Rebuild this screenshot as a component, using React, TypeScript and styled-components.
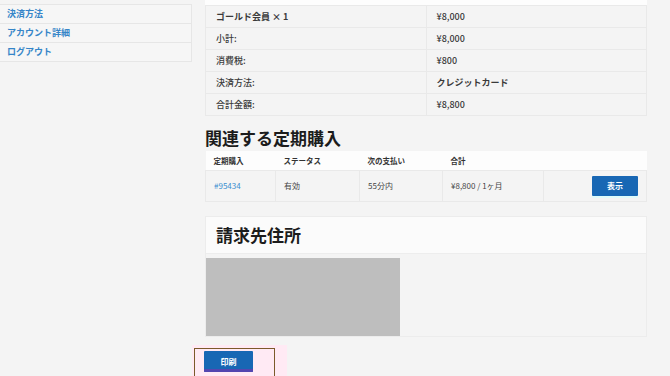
import React from "react";
import styled, { createGlobalStyle } from "styled-components";

const GlobalStyle = createGlobalStyle`
  html, body {
    margin: 0;
    padding: 0;
    background: #f4f4f4;
    font-family: "Noto Sans CJK JP", "Noto Sans", sans-serif;
    color: #333;
  }
`;

const Page = styled.div`
  display: flex;
  align-items: flex-start;
  width: 670px;
  height: 376px;
  overflow: hidden;
`;

const Sidebar = styled.nav`
  width: 191px;
  margin-top: 4px;
  border-top: 1px solid #e6e6e6;
  border-right: 1px solid #e6e6e6;
  background: #f6f6f6;
`;

const NavItem = styled.a`
  display: block;
  height: 18px;
  line-height: 18px;
  padding-left: 7px;
  font-size: 9px;
  font-weight: 700;
  color: #3585c8;
  border-bottom: 1px solid #e6e6e6;
  text-decoration: none;
`;

const Main = styled.main`
  width: 442px;
  margin-left: 13px;
`;

const TopStrip = styled.div`
  height: 5px;
  background: #fdfdfd;
`;

const Table = styled.table`
  width: 100%;
  border-collapse: collapse;
  table-layout: fixed;
`;

const Cell = styled.td<{ $bold?: boolean }>`
  height: 21px;
  padding: 0 10px;
  font-size: 9px;
  font-weight: ${(p) => (p.$bold ? 700 : 500)};
  color: #3a3a3a;
  border: 1px solid #e9e9e9;
  background: #f4f4f4;
`;

const SectionTitle = styled.h2`
  margin: 12px 0 3px;
  font-size: 17px;
  line-height: 20px;
  font-weight: 700;
  color: #1c1c1c;
`;

const SubTable = styled.table`
  width: 100%;
  border-collapse: collapse;
  table-layout: fixed;
`;

const HeadCell = styled.th<{ $w?: number }>`
  box-sizing: border-box;
  width: ${(p) => (p.$w ? `${p.$w}px` : "auto")};
  height: 19px;
  padding: 0 8px;
  text-align: left;
  font-size: 7.5px;
  font-weight: 700;
  color: #333;
  background: #fdfdfd;
`;

const BodyCell = styled.td<{ $right?: boolean }>`
  height: 30px;
  padding: 0 8px;
  text-align: ${(p) => (p.$right ? "right" : "left")};
  font-size: 8px;
  color: #444;
  background: #f4f4f4;
  border: 1px solid #e9e9e9;
`;

const SubLink = styled.a`
  color: #3a8fd0;
  text-decoration: none;
`;

const BlueButton = styled.button`
  display: block;
  height: 20px;
  padding: 0;
  border: none;
  border-radius: 1px;
  background: #1867b4;
  color: #fff;
  font-family: inherit;
  font-size: 8px;
  font-weight: 700;
`;

const ViewButton = styled(BlueButton)`
  width: 46px;
  margin-left: auto;
  box-shadow: 0 2px 0 #dffbfb;
`;

const AddressBox = styled.section`
  margin-top: 14px;
  border: 1px solid #ececec;
  background: #f4f4f4;
`;

const AddressHeader = styled.div`
  height: 36px;
  display: flex;
  align-items: center;
  padding-left: 10px;
  background: #fbfbfb;
  border-bottom: 1px solid #ededed;
`;

const AddressTitle = styled.h2`
  margin: 0;
  font-size: 17px;
  font-weight: 700;
  color: #1c1c1c;
`;

const AddressBody = styled.div`
  padding-top: 4px;
`;

const AddressPlaceholder = styled.div`
  width: 194px;
  height: 78px;
  background: #bebebe;
`;

const PrintArea = styled.div`
  margin: 8px 0 0 -13px;
  width: 95px;
  height: 40px;
  padding: 3px 0 0 2px;
  box-sizing: border-box;
  background: #ffeaf4;
`;

const PrintFrame = styled.div`
  width: 81px;
  height: 40px;
  padding: 2px 0 0 9px;
  box-sizing: border-box;
  border: 1.5px solid #7b5a2a;
`;

const PrintButton = styled(BlueButton)`
  width: 49px;
  height: 21px;
  box-shadow: inset 0 -3px 0 #5446b0;
`;

const orderRows: [string, string, boolean?][] = [
  ["ゴールド会員 × 1", "¥8,000"],
  ["小計:", "¥8,000"],
  ["消費税:", "¥800"],
  ["決済方法:", "クレジットカード", true],
  ["合計金額:", "¥8,800"],
];

export default function App(): React.ReactElement {
  return (
    <>
      <GlobalStyle />
      <Page>
        <Sidebar>
          <NavItem>決済方法</NavItem>
          <NavItem>アカウント詳細</NavItem>
          <NavItem>ログアウト</NavItem>
        </Sidebar>

        <Main>
          <TopStrip />
          <Table>
            <tbody>
              {orderRows.map(([label, value, strong]) => (
                <tr key={label}>
                  <Cell $bold={label.startsWith("ゴールド")}>{label}</Cell>
                  <Cell $bold={strong}>{value}</Cell>
                </tr>
              ))}
            </tbody>
          </Table>

          <SectionTitle>関連する定期購入</SectionTitle>
          <SubTable>
            <thead>
              <tr>
                <HeadCell $w={70}>定期購入</HeadCell>
                <HeadCell $w={84}>ステータス</HeadCell>
                <HeadCell $w={83}>次の支払い</HeadCell>
                <HeadCell $w={101}>合計</HeadCell>
                <HeadCell />
              </tr>
            </thead>
            <tbody>
              <tr>
                <BodyCell>
                  <SubLink>#95434</SubLink>
                </BodyCell>
                <BodyCell>有効</BodyCell>
                <BodyCell>55分内</BodyCell>
                <BodyCell>¥8,800 / 1ヶ月</BodyCell>
                <BodyCell $right>
                  <ViewButton>表示</ViewButton>
                </BodyCell>
              </tr>
            </tbody>
          </SubTable>

          <AddressBox>
            <AddressHeader>
              <AddressTitle>請求先住所</AddressTitle>
            </AddressHeader>
            <AddressBody>
              <AddressPlaceholder />
            </AddressBody>
          </AddressBox>

          <PrintArea>
            <PrintFrame>
              <PrintButton>印刷</PrintButton>
            </PrintFrame>
          </PrintArea>
        </Main>
      </Page>
    </>
  );
}
